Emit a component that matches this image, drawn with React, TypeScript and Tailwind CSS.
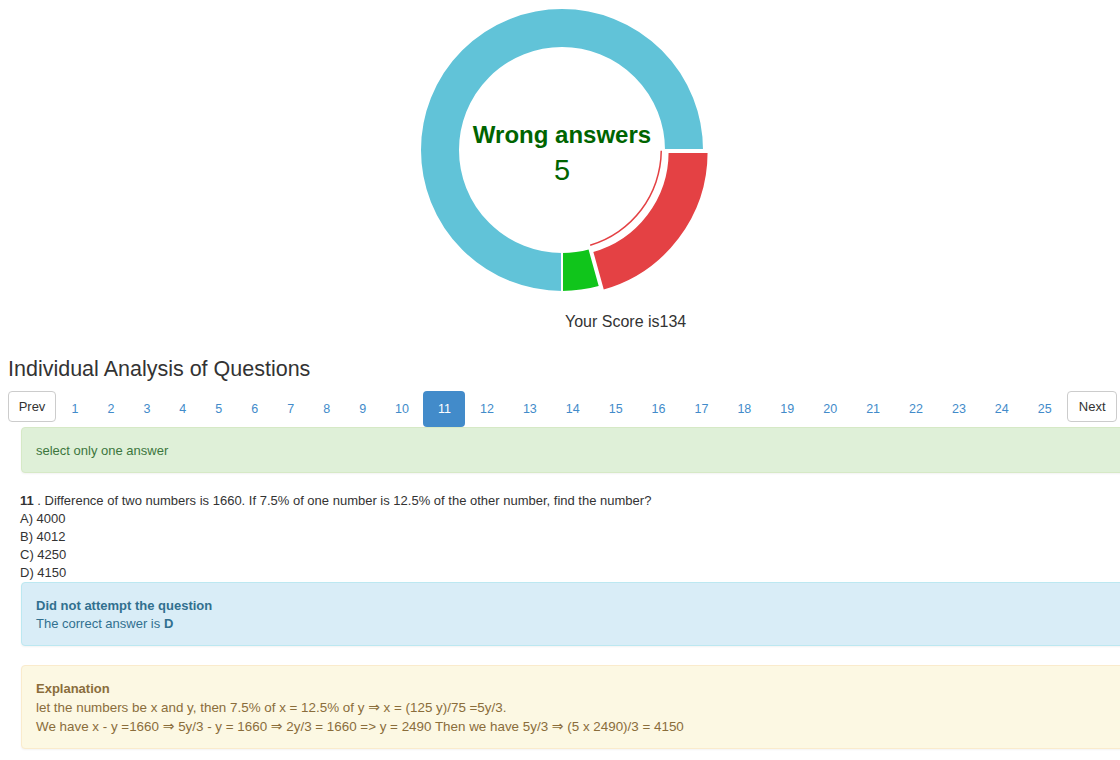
import React from "react";

const pages = Array.from({ length: 25 }, (_, i) => i + 1);

const pt = (r: number, a: number) => {
  const t = (a * Math.PI) / 180;
  return [r * Math.cos(t), r * Math.sin(t)];
};

// ring segment, angles clockwise from 3 o'clock
function arc(r0: number, r1: number, a0: number, a1: number) {
  const [x0, y0] = pt(r1, a0);
  const [x1, y1] = pt(r1, a1);
  const [x2, y2] = pt(r0, a1);
  const [x3, y3] = pt(r0, a0);
  const large = a1 - a0 > 180 ? 1 : 0;
  return `M${x0} ${y0} A${r1} ${r1} 0 ${large} 1 ${x1} ${y1} L${x2} ${y2} A${r0} ${r0} 0 ${large} 0 ${x3} ${y3}Z`;
}

function Donut() {
  return (
    <div className="relative w-[300px] h-[300px]">
      <svg width="300" height="300" viewBox="-150 -150 300 300">
        <path d={arc(102, 142, 90, 360)} fill="#61c3d8" stroke="#fff" strokeWidth="2" />
        <path d={arc(102, 142, 74.5, 90)} fill="#10c51b" stroke="#fff" strokeWidth="2" />
        <path d={arc(103, 144, 0, 74.5)} fill="#e44144" stroke="#fff" strokeWidth="2" transform="translate(2.6 2)" />
        <path d={arc(98.5, 100, 0.5, 73.5)} fill="#e44144" />
      </svg>
      <div className="absolute inset-0 flex flex-col items-center pt-[120px] text-[#006400]">
        <div className="text-[24px] font-bold leading-[30px]">Wrong answers</div>
        <div className="text-[29px] leading-[36px] mt-[2px]">5</div>
      </div>
    </div>
  );
}

function Arrow() {
  return <span className="font-['DejaVu_Sans',sans-serif] text-[14px]">⇒</span>;
}

export default function App() {
  return (
    <div className="w-[1120px] h-[760px] overflow-hidden bg-white text-[#333] font-['Liberation_Sans',Arial,sans-serif]">
      <div className="flex justify-center pl-[4px]">
        <Donut />
      </div>

      <div className="mt-[12px] pl-[565px] text-[16px] leading-[20px] text-[#333]">Your Score is134</div>

      <h3 className="mt-[24px] pl-[8px] text-[21.5px] leading-[26px] text-[#333]">Individual Analysis of Questions</h3>

      <div className="mt-[9px] flex items-start pl-[8px]">
        <button className="mr-[1px] w-[48px] h-[31px] border border-[#ccc] rounded-[4px] text-[13px] text-[#333] bg-white">Prev</button>
        {pages.map((p) =>
          p === 11 ? (
            <span key={p} className="h-[36px] px-[14.5px] pt-[1px] flex items-center text-[12.5px] text-white bg-[#428bca] rounded-[4px]">
              {p}
            </span>
          ) : (
            <span key={p} className="h-[36px] px-[14.5px] pt-[1px] flex items-center text-[12.5px] text-[#428bca]">
              {p}
            </span>
          )
        )}
        <button className="ml-[1px] w-[50px] h-[31px] border border-[#ccc] rounded-[4px] text-[13px] text-[#333] bg-white">Next</button>
      </div>

      <div className="ml-[21px] w-[1120px] border border-[#d6e9c6] bg-[#dff0d8] rounded-[4px] px-[14px] pt-[14px] pb-[12px] text-[13px] leading-[18px] text-[#3c763d] shadow-[0_1px_2px_rgba(0,0,0,0.05)]">
        select only one answer
      </div>

      <div className="mt-[19px] pl-[20px] text-[13px] leading-[18px] text-[#333]">
        <div>
          <b>11</b> . Difference of two numbers is 1660. If 7.5% of one number is 12.5% of the other number, find the number?
        </div>
        <div>A) 4000</div>
        <div>B) 4012</div>
        <div>C) 4250</div>
        <div>D) 4150</div>
      </div>

      <div className="ml-[21px] w-[1120px] border border-[#bce8f1] bg-[#d9edf7] rounded-[4px] px-[14px] pt-[14px] pb-[12px] text-[13px] leading-[18px] text-[#31708f] shadow-[0_1px_2px_rgba(0,0,0,0.05)]">
        <div className="font-bold">Did not attempt the question</div>
        <div>
          The correct answer is <b>D</b>
        </div>
      </div>

      <div className="mt-[19px] ml-[21px] w-[1120px] border border-[#faebcc] bg-[#fcf8e3] rounded-[4px] px-[14px] pt-[14px] pb-[12px] text-[13px] leading-[18px] text-[#8a6d3b] shadow-[0_1px_2px_rgba(0,0,0,0.05)]">
        <div className="font-bold">Explanation</div>
        <div className="text-[13.4px]">
          let the numbers be x and y, then 7.5% of x = 12.5% of y <Arrow /> x = (125 y)/75 =5y/3.
        </div>
        <div className="text-[13.4px]">
          We have x - y =1660 <Arrow /> 5y/3 - y = 1660 <Arrow /> 2y/3 = 1660 =&gt; y = 2490 Then we have 5y/3 <Arrow /> (5 x 2490)/3 = 4150
        </div>
      </div>
    </div>
  );
}
